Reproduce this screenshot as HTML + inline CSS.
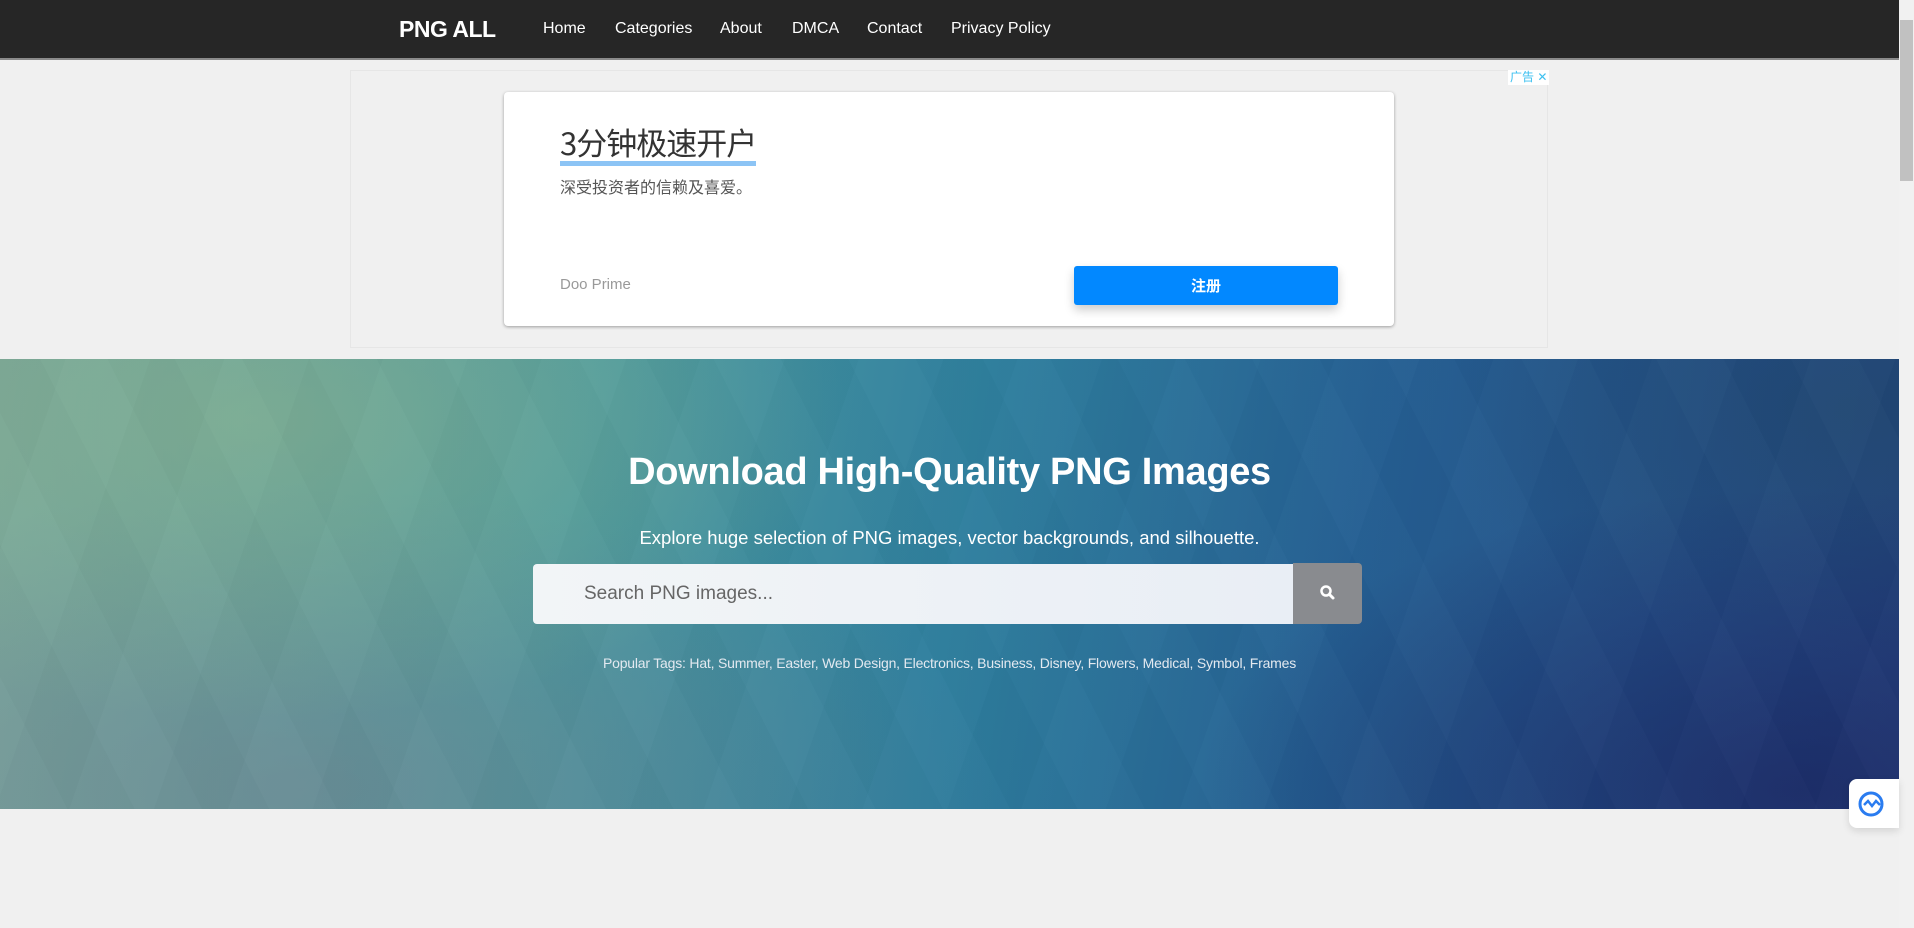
<!DOCTYPE html>
<html><head><meta charset="utf-8">
<style>
*{margin:0;padding:0;box-sizing:border-box}
html,body{width:1914px;height:928px;overflow:hidden;background:#f0f0f0;font-family:"Liberation Sans","Noto Sans CJK SC",sans-serif}
.nav{position:absolute;left:0;top:0;width:1899px;height:60px;background:#262626;border-bottom:2px solid #8a8a8a}
.logo{position:absolute;left:399px;top:16px;color:#fff;font-weight:bold;font-size:23px;letter-spacing:-0.5px}
.nav a{position:absolute;top:20px;color:#fff;font-size:16px;text-decoration:none}
.sb{position:absolute;left:1899px;top:0;width:15px;height:928px;background:#f1f1f1}
.thumb{position:absolute;left:1900px;top:20px;width:13px;height:161px;background:#c1c1c1}
.adbox{position:absolute;left:350px;top:70px;width:1198px;height:278px;border:1px solid #e6e6e6;background:#f0f0f0}
.adtag{position:absolute;left:1508px;top:70px;background:#fff;color:#3cc0f0;font-size:12px;padding:0 2px;height:15px;line-height:15px}
.card{position:absolute;left:504px;top:92px;width:890px;height:234px;background:#fff;border-radius:4px;box-shadow:0 1px 3px rgba(0,0,0,.35)}
.h{position:absolute;left:56px;top:30px;font-size:31px;color:#333;font-family:"Noto Sans CJK SC",sans-serif;line-height:40px;border-bottom:5px solid #8cc4f5;height:44px;letter-spacing:-1px}
.sub{position:absolute;left:56px;top:82px;font-size:16px;color:#555;font-family:"Noto Sans CJK SC",sans-serif}
.doo{position:absolute;left:56px;top:184px;font-size:15px;color:#999}
.btn{position:absolute;left:570px;top:174px;width:264px;height:39px;background:#0288ff;border-radius:3px;color:#fff;font-size:15px;text-align:center;line-height:39px;box-shadow:0 5px 10px rgba(0,0,0,.2);font-family:"Noto Sans CJK SC",sans-serif;font-weight:bold}
.hero{position:absolute;left:0;top:359px;width:1899px;height:450px;overflow:hidden;
background:
radial-gradient(ellipse 600px 300px at 250px 60px,rgba(140,180,140,.55),transparent),
radial-gradient(ellipse 700px 300px at 300px 430px,rgba(120,120,140,.45),transparent),
radial-gradient(ellipse 600px 300px at 1800px 430px,rgba(25,35,95,.7),transparent),
radial-gradient(ellipse 400px 250px at 1850px 50px,rgba(30,70,100,.5),transparent),
linear-gradient(100deg,#78a79c 0%,#4b9a9f 30%,#2f7f9e 50%,#245f93 70%,#22437e 100%)}
.hero .tri{position:absolute;inset:0;background:
repeating-linear-gradient(63deg,rgba(255,255,255,.012) 0 60px,rgba(0,0,0,.012) 60px 120px),
repeating-linear-gradient(-71deg,rgba(255,255,255,.012) 0 80px,rgba(0,0,0,.012) 80px 150px)}
.title{position:absolute;left:0;width:1899px;top:92px;text-align:center;color:#fff;font-weight:bold;font-size:38px;letter-spacing:-0.3px}
.st{position:absolute;left:0;width:1899px;top:168px;text-align:center;color:#fff;font-size:18.5px}
.search{position:absolute;left:533px;top:205px;width:760px;height:60px;background:linear-gradient(90deg,#f2f5f7,#e9eef5);border-radius:4px 0 0 4px}
.search span{position:absolute;left:51px;top:19px;font-size:19px;color:#666}
.sbtn{position:absolute;left:1293px;top:204px;width:69px;height:61px;background:#898b8f;border-radius:0 4px 4px 0}
.tags{position:absolute;left:0;width:1899px;top:296px;text-align:center;color:#e3e9f0;font-size:14px;letter-spacing:-0.2px}
.wid{position:absolute;left:1849px;top:779px;width:50px;height:49px;background:#fff;border-radius:8px 0 0 8px;box-shadow:0 3px 8px rgba(0,0,0,.12)}
</style></head><body>
<div class="nav">
<div class="logo">PNG ALL</div>
<a style="left:543px">Home</a><a style="left:615px">Categories</a><a style="left:720px">About</a><a style="left:792px">DMCA</a><a style="left:867px">Contact</a><a style="left:951px">Privacy Policy</a>
</div>
<div class="sb"></div><div class="thumb"></div>
<div class="adbox"></div>
<div class="adtag">广告 ✕</div>
<div class="card">
<div class="h">3分钟极速开户</div>
<div class="sub">深受投资者的信赖及喜爱。</div>
<div class="doo">Doo Prime</div>
<div class="btn">注册</div>
</div>
<div class="hero"><div class="tri"></div>
<div class="title">Download High-Quality PNG Images</div>
<div class="st">Explore huge selection of PNG images, vector backgrounds, and silhouette.</div>
<div class="search"><span>Search PNG images...</span></div>
<div class="sbtn"><svg width="69" height="61" viewBox="0 0 69 61"><circle cx="33" cy="28" r="4.5" fill="none" stroke="#fff" stroke-width="2.5"/><line x1="36.5" y1="31.5" x2="40" y2="35" stroke="#fff" stroke-width="3" stroke-linecap="round"/></svg></div>
<div class="tags">Popular Tags: Hat, Summer, Easter, Web Design, Electronics, Business, Disney, Flowers, Medical, Symbol, Frames</div>
</div>
<div class="wid"><svg width="50" height="49" viewBox="0 0 50 49"><circle cx="22" cy="25" r="11" fill="none" stroke="#2a7cf0" stroke-width="3"/><path d="M15 26 l4-4 4 5 4-5 4 4" fill="none" stroke="#2a7cf0" stroke-width="2.5"/></svg></div>
</body></html>
